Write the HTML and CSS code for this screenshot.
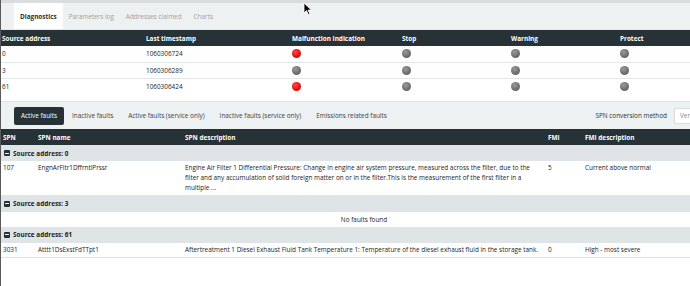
FILE: index.html
```html
<!DOCTYPE html>
<html>
<head>
<meta charset="utf-8">
<link rel="stylesheet" href="styles.css">
</head>
<body>
<div class="page">
  <div class="topstrip"></div>
  <div class="tabs">
    <div class="tab active">Diagnostics</div>
    <div class="tab">Parameters log</div>
    <div class="tab">Addresses claimed</div>
    <div class="tab">Charts</div>
  </div>
  <table class="lamps">
    <colgroup><col class="c1"><col class="c2"><col class="c3"><col class="c4"><col class="c5"><col></colgroup>
    <thead>
      <tr><th>Source address</th><th>Last timestamp</th><th>Malfunction Indication</th><th>Stop</th><th>Warning</th><th>Protect</th></tr>
    </thead>
    <tbody>
      <tr><td>0</td><td>1060306724</td><td><span class="dot red"></span></td><td><span class="dot"></span></td><td><span class="dot"></span></td><td><span class="dot"></span></td></tr>
      <tr><td>3</td><td>1060306289</td><td><span class="dot"></span></td><td><span class="dot"></span></td><td><span class="dot"></span></td><td><span class="dot"></span></td></tr>
      <tr><td>61</td><td>1060306424</td><td><span class="dot red"></span></td><td><span class="dot"></span></td><td><span class="dot"></span></td><td><span class="dot"></span></td></tr>
    </tbody>
  </table>
  <div class="filters">
    <div class="ftab active">Active faults</div>
    <div class="ftab">Inactive faults</div>
    <div class="ftab">Active faults (service only)</div>
    <div class="ftab">Inactive faults (service only)</div>
    <div class="ftab">Emissions related faults</div>
    <div class="spacer"></div>
    <div class="convlabel">SPN conversion method</div>
    <div class="select">Version 4</div>
  </div>
  <table class="faults">
    <colgroup><col class="f1"><col class="f2"><col class="f3"><col class="f4"><col></colgroup>
    <thead>
      <tr><th>SPN</th><th>SPN name</th><th>SPN description</th><th>FMI</th><th>FMI description</th></tr>
    </thead>
    <tbody>
      <tr class="group"><td colspan="5"><span class="minus"></span>Source address: 0</td></tr>
      <tr class="item"><td>107</td><td>EngnArFltr1DffrntlPrssr</td><td>Engine Air Filter 1 Differential Pressure: Change in engine air system pressure, measured across the filter, due to the filter and any accumulation of solid foreign matter on or in the filter.This is the measurement of the first filter in a multiple ...</td><td>5</td><td>Current above normal</td></tr>
      <tr class="group"><td colspan="5"><span class="minus"></span>Source address: 3</td></tr>
      <tr class="empty"><td colspan="5">No faults found</td></tr>
      <tr class="group"><td colspan="5"><span class="minus"></span>Source address: 61</td></tr>
      <tr class="item"><td>3031</td><td>Atttt1DsExstFdTTpt1</td><td>Aftertreatment 1 Diesel Exhaust Fluid Tank Temperature 1: Temperature of the diesel exhaust fluid in the storage tank.</td><td>0</td><td>High - most severe</td></tr>
    </tbody>
  </table>
  <svg class="cursor" width="10" height="14" viewBox="0 0 10 14"><path d="M1 1 L1 11 L3.5 8.6 L5.3 12.6 L6.8 11.9 L5.1 8.1 L8.4 8.1 Z" fill="#000" stroke="#fff" stroke-width="0.8"/></svg>
</div>
</body>
</html>
```
FILE: styles.css
```css
* { box-sizing: border-box; }
html, body { margin: 0; padding: 0; background: #fff; }
body { font-family: "Open Sans", "Noto Sans", sans-serif; font-size: 6.4px; color: #222; }
.page { position: relative; width: 690px; height: 286px; overflow: hidden; border-left: 1px solid #5a5a5a; }
.topstrip { height: 3px; background: #d9dddd; }
.tabs { display: flex; height: 27px; background: #eef1f1; padding-left: 13px; border-bottom: 1px solid #e4e7e7; }
.tab { padding: 0 6px; line-height: 27px; color: #9aa0a2; }
.tab.active { background: #fff; color: #2a3236; font-weight: 700; }
table { border-collapse: collapse; table-layout: fixed; }
.lamps { width: 689px; }
.lamps .c1 { width: 144px; } .lamps .c2 { width: 146px; } .lamps .c3 { width: 110px; } .lamps .c4 { width: 109px; } .lamps .c5 { width: 109px; }
th { background: #273237; color: #fff; font-weight: 700; text-align: left; height: 16px; padding: 0 1px; }
.lamps td { height: 16px; padding: 0 1px; border-bottom: 1px solid #e3e6e6; }
.lamps tbody tr:last-child td { border-bottom: none; }
.dot { display: block; width: 9px; height: 9px; border-radius: 50%; background: radial-gradient(circle at 40% 35%, #9a9a9a 0, #6f6f6f 55%, #505050 100%); }
.dot.red { background: radial-gradient(circle at 40% 35%, #ff4a4a 0, #e41010 55%, #b30000 100%); }
.filters { margin-top: 7px; height: 28px; background: #eef1f1; border-top: 1px solid #e0e3e3; display: flex; align-items: center; padding-left: 13px; white-space: nowrap; }
.ftab { padding: 0 7px; height: 18px; line-height: 18px; color: #3a4145; border-radius: 2px; margin-right: 1px; }
.ftab.active { background: #273237; color: #fff; }
.spacer { flex: 1; }
.convlabel { color: #2a3236; margin-right: 7px; }
.select { width: 40px; height: 16px; line-height: 14px; background: #fff; border: 1px solid #d8dcdc; padding-left: 5px; color: #888; margin-right: -24px; }
.faults { width: 726px; }
.faults .f1 { width: 35px; } .faults .f2 { width: 147px; } .faults .f3 { width: 363px; } .faults .f4 { width: 37px; }
.faults th { padding: 0 2px; }
.faults td { padding: 0 2px; vertical-align: top; }
.group td { background: #dfe5e6; font-weight: 700; height: 16px; vertical-align: middle; padding-left: 3px; }
.minus { display: inline-block; width: 6px; height: 6px; background: #273237; border-radius: 1px; margin-right: 3px; vertical-align: -0.5px; position: relative; }
.minus::after { content: ""; position: absolute; left: 1px; right: 1px; top: 2.5px; height: 1px; background: #fff; }
.item td { line-height: 10px; padding-top: 2px; padding-bottom: 2px; border-bottom: 1px solid #dfe3e3; }
.empty td { height: 15px; text-align: center; vertical-align: middle; }
.cursor { position: absolute; left: 302px; top: 2px; }
```
